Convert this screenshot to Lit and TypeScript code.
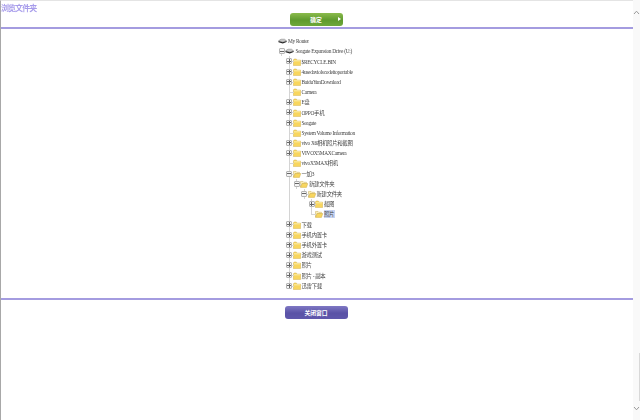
import { LitElement, html, css, svg } from "lit";
import { customElement } from "lit/decorators.js";

type Row = { t: string; d: number; k: "plus" | "minus" | "leaf" | "none"; last?: boolean; sel?: boolean; icon: "drive" | "folder" | "open" };

const d1 = (t: string, k: Row["k"], icon: Row["icon"] = "folder", last = false): Row => ({ t, d: 1, k, icon, last });
const rows: Row[] = [
  { t: "My Router", d: 0, k: "none", icon: "drive" },
  { t: "Seagate Expansion Drive (U:)", d: 0, k: "minus", icon: "drive" },
  d1("$RECYCLE.BIN", "plus"),
  d1("4usedaviolscodeitoportable", "plus"),
  d1("BaiduYunDownload", "plus"),
  d1("Camera", "leaf"),
  d1("E盘", "plus"),
  d1("OPPO手机", "plus"),
  d1("Seagate", "plus"),
  d1("System Volume Information", "leaf"),
  d1("vivo X6相机照片和截图", "plus"),
  d1("VIVOX5MAXCamera", "plus"),
  d1("vivoX5MAX相机", "leaf"),
  d1("一加3", "minus", "open"),
  { t: "新建文件夹", d: 2, k: "minus", icon: "open" },
  { t: "新建文件夹", d: 3, k: "minus", icon: "open" },
  { t: "截图", d: 4, k: "plus", icon: "folder" },
  { t: "照片", d: 4, k: "leaf", icon: "open", sel: true, last: true },
  d1("下载", "plus"),
  d1("手机内置卡", "plus"),
  d1("手机外置卡", "plus"),
  d1("游戏测试", "plus"),
  d1("照片", "plus"),
  d1("照片 - 副本", "plus"),
  d1("迅雷下载", "plus", "folder", true),
];

const folder = svg`<path d="M.4 2V7.8H7.8V2.2H4.2L3.4 1H1.2Z" fill="#f8d65e" stroke="#cfae4a" stroke-width=".5"/><path d="M.9 2.9H7.3" stroke="#fdf0b4" stroke-width=".9"/>`;
const open = svg`<path d="M.5 7.5V1.5H3.2L4 2.3H6.6V3.6H2.2L.5 7.5Z" fill="#fbeeb8" stroke="#c4a850" stroke-width=".5"/><path d="M.7 7.6L2.2 3.6H8L6.6 7.6Z" fill="#f8d65e" stroke="#cfae4a" stroke-width=".5"/>`;
const drive = svg`<path d="M.5 3.8L3 2.2H6.4L8.6 3.8L4.8 5Z" fill="#c8c8c8" stroke="#666" stroke-width=".4"/><path d="M.5 4L4.8 5.2L8.6 4V5.1L4.8 6.5L.5 5.2Z" fill="#262626"/>`;

@customElement("app-root")
export class AppRoot extends LitElement {
  static styles = css`
    :host {
      display: flex;
      height: 420px;
      width: 640px;
      overflow: hidden;
      background: #fff;
      font-family: "Liberation Serif", "Noto Sans CJK SC", serif;
    }
    .page {
      flex: 1;
      min-width: 0;
      display: flex;
      flex-direction: column;
      border-top: 1px solid #e4e4e4;
      border-left: 1px solid #a8a8a8;
      filter: blur(0.3px);
    }
    .title {
      height: 12px;
      font: bold 8px/13px "Noto Sans CJK SC", sans-serif;
      color: #a79ceb;
      letter-spacing: -0.95px;
    }
    .bar {
      display: flex;
      justify-content: center;
      height: 14px;
      padding-right: 2px;
    }
    .btn {
      height: 13px;
      border-radius: 3px;
      color: #fff;
      font: bold 5.8px/13px "Noto Sans CJK SC", sans-serif;
      text-align: center;
      position: relative;
    }
    .ok {
      width: 53px;
      background: linear-gradient(#8bbb4c, #5f9a2e 55%, #6ea83a);
    }
    .ok::after {
      content: "";
      position: absolute;
      right: 2px;
      top: 4px;
      border-left: 3px solid #fff;
      border-top: 2.5px solid transparent;
      border-bottom: 2.5px solid transparent;
    }
    .close {
      width: 63px;
      background: linear-gradient(#7f78c4, #5a52a6 55%, #5f57ac);
    }
    hr {
      margin: 0;
      border: 0;
      height: 2px;
      background: #a49ce0;
    }
    .tree {
      padding: 7.1px 0 6.8px 276.5px;
      font-size: 5.4px;
      letter-spacing: -0.3px;
      color: #444;
    }
    .row {
      display: flex;
      align-items: center;
      height: 10.2px;
      white-space: nowrap;
    }
    .guide {
      flex: none;
      width: 7.5px;
      align-self: stretch;
      position: relative;
    }
    .line::before {
      content: "";
      position: absolute;
      left: 3.5px;
      top: 0;
      bottom: 0;
      border-left: 1px solid #d4d4d4;
    }
    .slot {
      flex: none;
      width: 7.5px;
      align-self: stretch;
      position: relative;
    }
    .slot.conn::before {
      content: "";
      position: absolute;
      left: 3.5px;
      top: 0;
      height: 5px;
      width: 4px;
      border-left: 1px solid #d4d4d4;
      border-bottom: 1px solid #d4d4d4;
    }
    .slot.cont::after {
      content: "";
      position: absolute;
      left: 3.5px;
      top: 5px;
      bottom: 0;
      border-left: 1px solid #d4d4d4;
    }
    .box {
      position: absolute;
      left: 1px;
      top: 2px;
      width: 4px;
      height: 4px;
      box-sizing: content-box;
      background: #f4f4f4;
      border: 1px solid #b4b4b4;
      border-radius: 1px;
      z-index: 1;
    }
    .box::before {
      content: "";
      position: absolute;
      left: 0;
      right: 0;
      top: 1.5px;
      height: 1px;
      background: #666;
    }
    .box.plus::after {
      content: "";
      position: absolute;
      top: 0;
      bottom: 0;
      left: 1.5px;
      width: 1px;
      background: #666;
    }
    svg.ico {
      flex: none;
      width: 8px;
      height: 8px;
    }
    svg.ico.drv {
      width: 9px;
      height: 9px;
      margin-right: 0.5px;
    }
    .label {
      margin-left: 0.5px;
      padding: 0 0.5px;
      line-height: 8px;
    }
    .sel {
      background: #c8d4f2;
    }
    .foot {
      display: flex;
      justify-content: center;
      padding-top: 6px;
      padding-right: 2px;
    }
    .scroll {
      flex: none;
      width: 7px;
      background: #f9f9f9;
      position: relative;
    }
    .chev {
      position: absolute;
      left: 0;
      width: 7px;
      height: 5px;
    }
    .up {
      top: 10px;
    }
    .down {
      top: 406px;
    }
    .thumb {
      position: absolute;
      right: 0;
      top: 353px;
      height: 48px;
      width: 1px;
      background: #d8d8d8;
    }
  `;

  private renderRow(r: Row) {
    const guides = [];
    for (let n = 0; n < r.d; n++) {
      guides.push(html`<span class="guide ${n === 1 ? "line" : ""}"></span>`);
    }
    const conn = r.d >= 1 ? "conn" : "";
    const cont = (r.d >= 1 && !r.last) || r.k === "minus" ? "cont" : "";
    const isDrive = r.icon === "drive";
    return html`<div class="row">
      ${r.k === "none"
        ? ""
        : html`${guides}<span class="slot ${conn} ${cont}">
              ${r.k === "plus" || r.k === "minus" ? html`<span class="box ${r.k}"></span>` : ""}
            </span>`}
      <svg class="ico ${isDrive ? "drv" : ""}" viewBox="0 0 ${isDrive ? 9 : 8.2} ${isDrive ? 9 : 8.2}">
        ${isDrive ? drive : r.icon === "open" ? open : folder}
      </svg>
      <span class="label ${r.sel ? "sel" : ""}">${r.t}</span>
    </div>`;
  }

  render() {
    return html`<div class="page">
        <div class="title">浏览文件夹</div>
        <div class="bar"><div class="btn ok">确定</div></div>
        <hr />
        <div class="tree">${rows.map((r) => this.renderRow(r))}</div>
        <hr />
        <div class="foot"><div class="btn close">关闭窗口</div></div>
      </div>
      <div class="scroll">
        <svg class="chev up" viewBox="0 0 7 5"><path d="M1 4L3.5 1.2L6 4" fill="none" stroke="#999" stroke-width="1"/></svg>
        <div class="thumb"></div>
        <svg class="chev down" viewBox="0 0 7 5"><path d="M1 1L3.5 3.8L6 1" fill="none" stroke="#999" stroke-width="1"/></svg>
      </div>`;
  }
}
